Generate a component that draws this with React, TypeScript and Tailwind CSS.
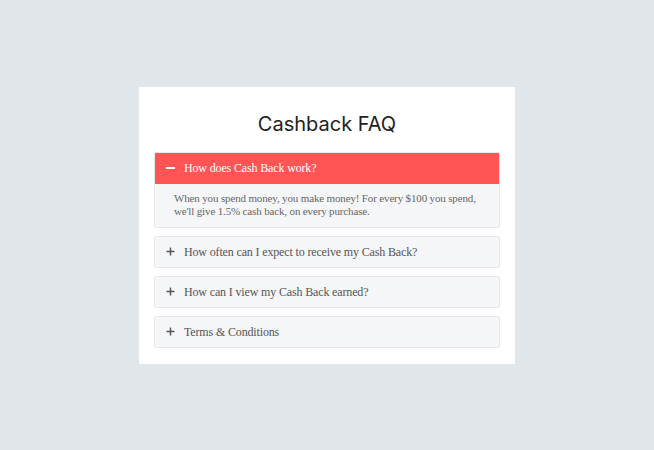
import { useState } from "react";

const items = [
  {
    q: "How does Cash Back work?",
    a: "When you spend money, you make money! For every $100 you spend, we'll give 1.5% cash back, on every purchase.",
  },
  { q: "How often can I expect to receive my Cash Back?", a: "" },
  { q: "How can I view my Cash Back earned?", a: "" },
  { q: "Terms & Conditions", a: "" },
];

export default function App() {
  const [open, setOpen] = useState(0);

  return (
    <div className="flex h-[450px] w-full items-center justify-center bg-[#e1e6ea]">
      <div className="w-[376px] bg-white px-[15px] pb-[16px] pt-[23px]">
        <h1
          className="mb-[14px] text-center text-[20px] leading-[28px] text-[#222]"
          style={{ fontFamily: "Inter, 'Open Sans', sans-serif", fontWeight: 400 }}
        >
          Cashback FAQ
        </h1>
        <div className="flex flex-col gap-2">
          {items.map((it, i) => {
            const isOpen = open === i;
            return (
              <div
                key={it.q}
                className="overflow-hidden rounded-[2px] border border-[#e4e7eb] bg-[#f5f6f8]"
                style={{ fontFamily: "'Liberation Serif', serif" }}
              >
                <button
                  type="button"
                  onClick={() => setOpen(isOpen ? -1 : i)}
                  className={
                    isOpen
                      ? "-m-px flex h-[32px] w-[calc(100%+2px)] items-center gap-[9px] bg-[#ff5555] pl-[12px] text-left text-[12px] tracking-[-0.15px] text-white"
                      : "flex h-[30px] w-full items-center gap-[9px] pl-[11px] text-left text-[12px] tracking-[-0.15px] text-[#555]"
                  }
                >
                  <span className="flex w-[9px] items-center justify-center">
                    {isOpen ? (
                      <span className="block h-[2px] w-[9px] bg-white" />
                    ) : (
                      <svg width="9" height="9" viewBox="0 0 9 9">
                        <path d="M4.5 0.5v8M0.5 4.5h8" stroke="#555" strokeWidth="1.5" />
                      </svg>
                    )}
                  </span>
                  <span>{it.q}</span>
                </button>
                {isOpen && (
                  <div className="pb-[9px] pl-[19px] pr-[20px] pt-[9px] text-[11px] leading-[13px] tracking-[-0.15px] text-[#666]">
                    {it.a}
                  </div>
                )}
              </div>
            );
          })}
        </div>
      </div>
    </div>
  );
}
